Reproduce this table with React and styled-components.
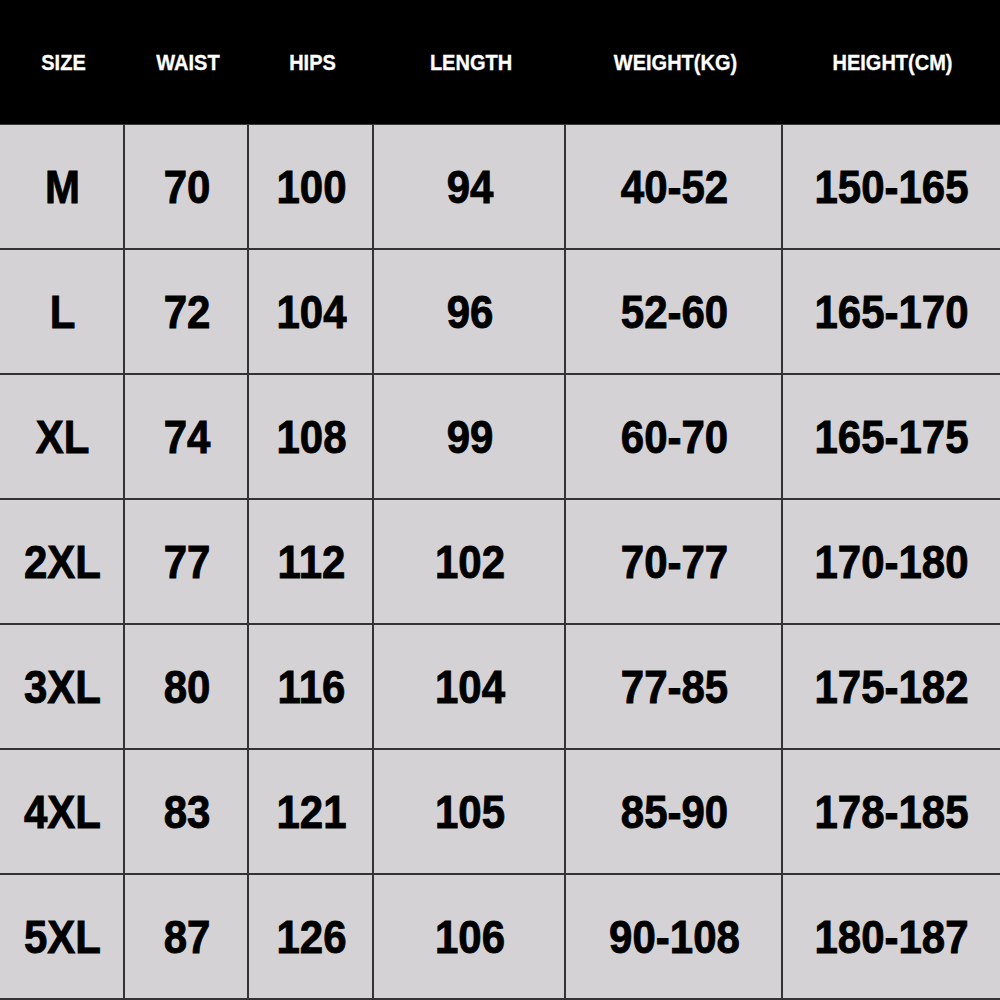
import React from "react";
import styled, { createGlobalStyle } from "styled-components";

const columns = ["SIZE", "WAIST", "HIPS", "LENGTH", "WEIGHT(KG)", "HEIGHT(CM)"];

const rows = [
  ["M", "70", "100", "94", "40-52", "150-165"],
  ["L", "72", "104", "96", "52-60", "165-170"],
  ["XL", "74", "108", "99", "60-70", "165-175"],
  ["2XL", "77", "112", "102", "70-77", "170-180"],
  ["3XL", "80", "116", "104", "77-85", "175-182"],
  ["4XL", "83", "121", "105", "85-90", "178-185"],
  ["5XL", "87", "126", "106", "90-108", "180-187"],
];

const App = () => {
  return (
    <>
      <GlobalStyle />
      <Table>
        {columns.map((c) => (
          <HeadCell key={c}>
            <HeadText>{c}</HeadText>
          </HeadCell>
        ))}
        {rows.map((row) =>
          row.map((v, i) => (
            <Cell key={row[0] + i} last={i === row.length - 1}>
              <CellText>{v}</CellText>
            </Cell>
          ))
        )}
      </Table>
    </>
  );
};
export default App;

const GlobalStyle = createGlobalStyle`
  html, body {
    margin: 0;
    padding: 0;
    background: #d4d2d4;
  }
  * {
    box-sizing: border-box;
  }
`;

const Table = styled.div`
  display: grid;
  grid-template-columns: 125px 124px 125px 192px 217px 217px;
  grid-template-rows: repeat(8, 125px);
  width: 1000px;
  height: 1000px;
  font-family: "Liberation Sans", Arial, sans-serif;
  font-weight: 700;
`;

const HeadCell = styled.div`
  display: flex;
  align-items: center;
  justify-content: center;
  background: #000;
  border-bottom: 1px solid #3a3a3a;
  padding-left: 2px;
`;

const HeadText = styled.span`
  color: #fff;
  font-size: 20px;
  display: inline-block;
  transform: scaleY(1.1);
  line-height: 1;
  -webkit-text-stroke: 0.3px #fff;
`;

const Cell = styled.div`
  display: flex;
  align-items: center;
  justify-content: center;
  background: #d4d2d4;
  border-bottom: 2px solid #333;
  border-right: ${(p) => (p.last ? "none" : "2px solid #333")};
  padding-left: ${(p) => (p.last ? "0" : "2px")};
`;

const CellText = styled.span`
  color: #000;
  font-size: 42px;
  display: inline-block;
  transform: scaleY(1.12);
  line-height: 1;
  -webkit-text-stroke: 0.8px #000;
`;
